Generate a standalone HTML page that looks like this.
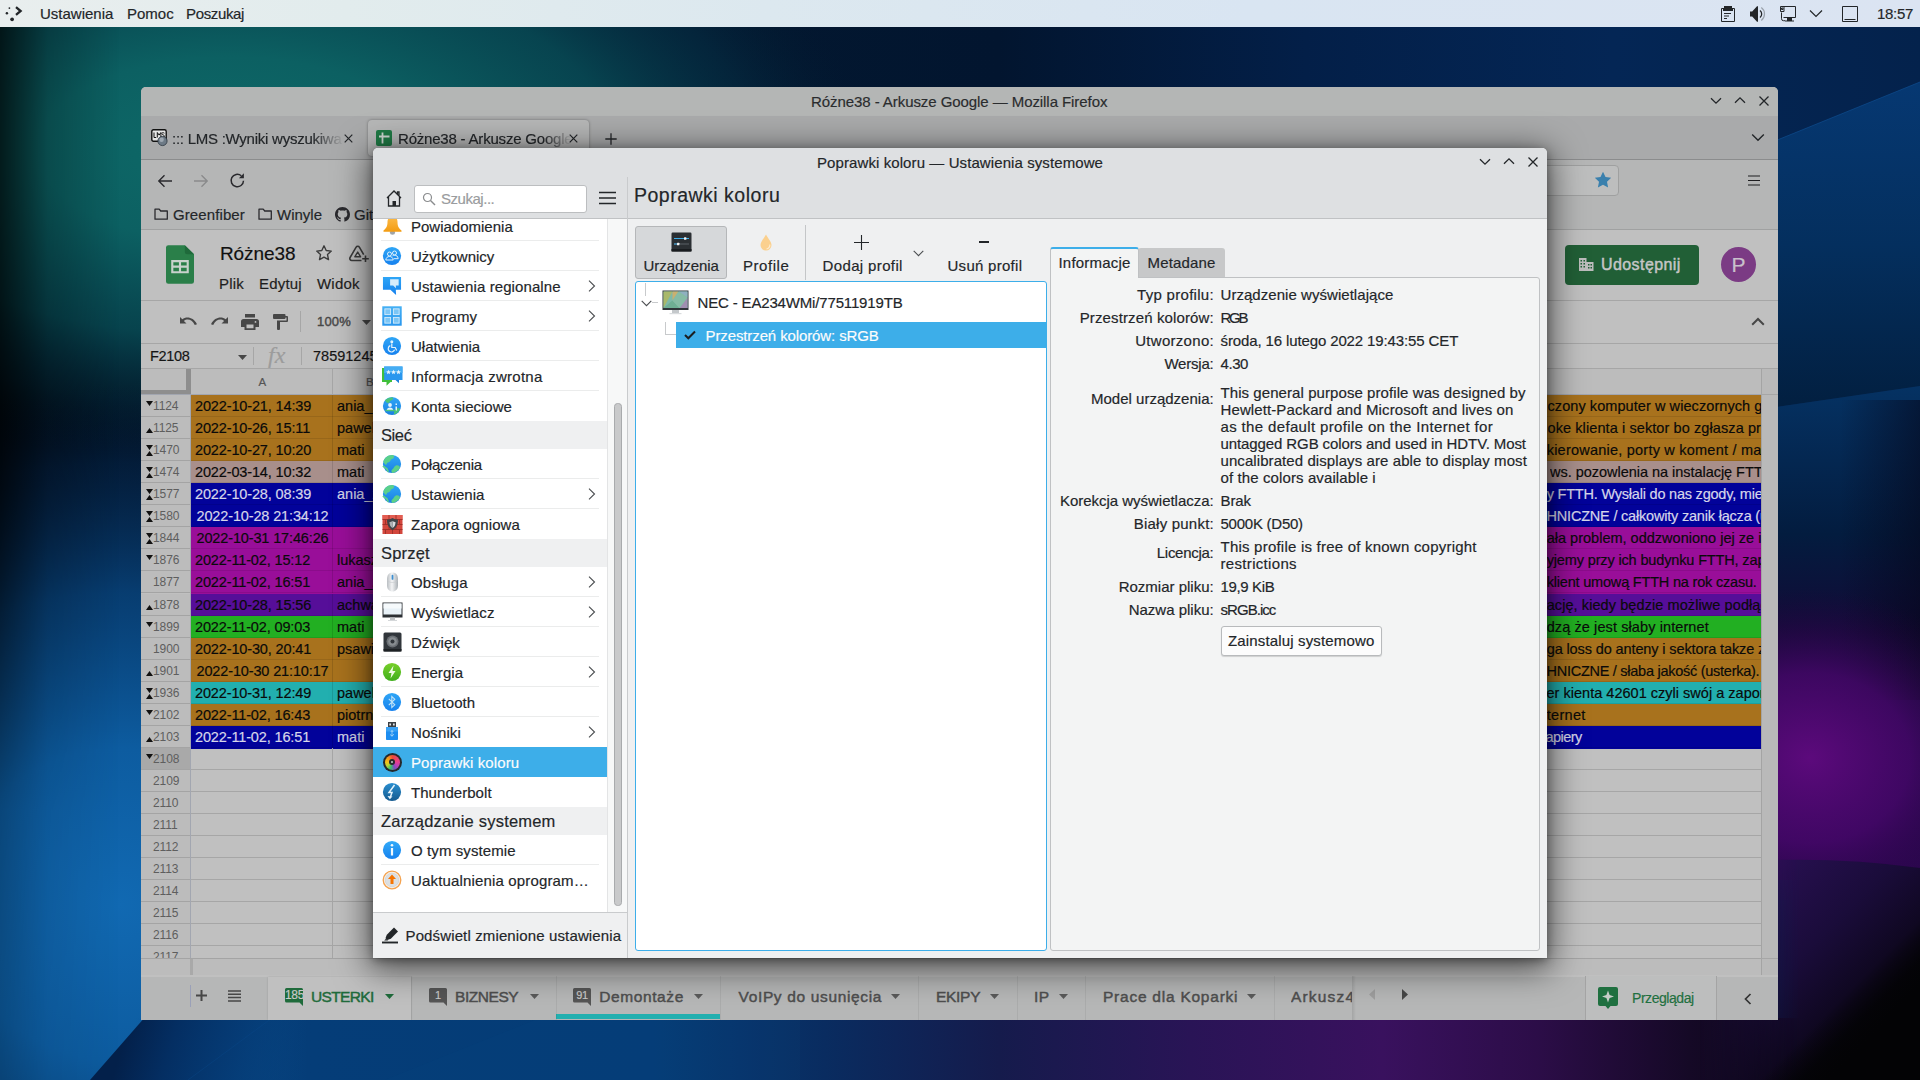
<!DOCTYPE html>
<html lang="pl"><head><meta charset="utf-8"><title>Poprawki koloru</title>
<style>
*{box-sizing:border-box;margin:0;padding:0}
html,body{width:1920px;height:1080px;overflow:hidden;background:#04101f}
body{font-family:"Liberation Sans",sans-serif;font-size:15px;color:#232629;position:relative}
.a{position:absolute}
svg{display:block;overflow:visible}
span,div{white-space:nowrap}
#wall{position:absolute;left:0;top:0;width:1920px;height:1080px}
</style></head>
<body>
<svg id="wall" width="1920" height="1080" viewBox="0 0 1920 1080">
<defs>
<linearGradient id="wbase" x1="0" y1="0" x2="1" y2="0">
<stop offset="0" stop-color="#020d16"/><stop offset=".36" stop-color="#031830"/><stop offset=".52" stop-color="#02152f"/><stop offset=".68" stop-color="#031f48"/><stop offset=".84" stop-color="#042655"/><stop offset="1" stop-color="#04224c"/>
</linearGradient>
<radialGradient id="wteal" cx="0" cy="0" r="1" gradientUnits="userSpaceOnUse" gradientTransform="translate(230 150) scale(640 310)">
<stop offset="0" stop-color="#0e6a68"/><stop offset=".3" stop-color="#0c6062"/><stop offset=".6" stop-color="#084c56" stop-opacity=".85"/><stop offset=".82" stop-color="#053448" stop-opacity=".45"/><stop offset="1" stop-color="#031c30" stop-opacity="0"/>
</radialGradient>
<radialGradient id="wblue" cx="0" cy="0" r="1" gradientUnits="userSpaceOnUse" gradientTransform="translate(120 905) scale(560 520)">
<stop offset="0" stop-color="#1169b2"/><stop offset=".3" stop-color="#0d5ca0"/><stop offset=".6" stop-color="#08427a" stop-opacity=".9"/><stop offset=".85" stop-color="#052a58" stop-opacity=".5"/><stop offset="1" stop-color="#031c40" stop-opacity="0"/>
</radialGradient>
<linearGradient id="wleft" x1="0" y1="0" x2="1" y2="0">
<stop offset="0" stop-color="#000" stop-opacity=".7"/><stop offset=".4" stop-color="#000" stop-opacity=".22"/><stop offset="1" stop-color="#000" stop-opacity="0"/>
</linearGradient>
<linearGradient id="wleftv" x1="0" y1="0" x2="0" y2="1">
<stop offset="0" stop-color="#fff"/><stop offset=".45" stop-color="#fff"/><stop offset=".75" stop-color="#fff" stop-opacity=".35"/><stop offset="1" stop-color="#fff" stop-opacity=".25"/>
</linearGradient>
<mask id="mleft"><rect width="120" height="1080" fill="url(#wleftv)"/></mask>
<linearGradient id="wbot" x1="0" y1="0" x2="1" y2="0">
<stop offset="0" stop-color="#0a569a" stop-opacity="0"/><stop offset=".07" stop-color="#064a8a" stop-opacity="0"/><stop offset=".16" stop-color="#053d78"/><stop offset=".34" stop-color="#053c76"/><stop offset=".43" stop-color="#092c60"/><stop offset=".52" stop-color="#151b4c"/><stop offset=".62" stop-color="#291456"/><stop offset=".72" stop-color="#39115e"/><stop offset=".8" stop-color="#2c0d48"/><stop offset=".88" stop-color="#150926"/><stop offset=".94" stop-color="#0a0614"/><stop offset="1" stop-color="#020204"/>
</linearGradient>
<linearGradient id="wr1" x1="0" y1="0" x2="0" y2="1">
<stop offset="0" stop-color="#063872"/><stop offset=".5" stop-color="#042f5e"/><stop offset="1" stop-color="#021f40"/>
</linearGradient>
<linearGradient id="wr2" x1="0" y1="0" x2="0" y2="1">
<stop offset="0" stop-color="#053263"/><stop offset=".3" stop-color="#031c3f"/><stop offset=".5" stop-color="#120a36"/><stop offset="1" stop-color="#2c0650"/>
</linearGradient>
<radialGradient id="wpur" cx="0" cy="0" r="1" gradientUnits="userSpaceOnUse" gradientTransform="translate(1810 758) scale(200 170)">
<stop offset="0" stop-color="#5c0a7c"/><stop offset=".5" stop-color="#46076a" stop-opacity=".8"/><stop offset="1" stop-color="#20063c" stop-opacity="0"/>
</radialGradient>
<linearGradient id="wr3" x1="0" y1="0" x2="1" y2="1">
<stop offset="0" stop-color="#311260"/><stop offset=".45" stop-color="#1a0c3a"/><stop offset=".8" stop-color="#06040c"/><stop offset="1" stop-color="#020203"/>
</linearGradient>
<linearGradient id="wbl" gradientUnits="userSpaceOnUse" x1="122" y1="1046" x2="300" y2="1100"><stop offset="0" stop-color="#03204a"/><stop offset=".25" stop-color="#042e62"/><stop offset=".6" stop-color="#053a74" stop-opacity=".9"/><stop offset="1" stop-color="#053d78" stop-opacity="0"/></linearGradient>
<linearGradient id="wr3m" gradientUnits="userSpaceOnUse" x1="1700" y1="0" x2="1800" y2="0"><stop offset="0" stop-color="#fff" stop-opacity="0"/><stop offset="1" stop-color="#fff"/></linearGradient><mask id="mr3"><rect x="1600" y="800" width="320" height="280" fill="url(#wr3m)"/></mask>
<linearGradient id="wbk" gradientUnits="userSpaceOnUse" x1="1858" y1="982" x2="1892" y2="1016"><stop offset="0" stop-color="#030305" stop-opacity="0"/><stop offset=".6" stop-color="#030305" stop-opacity=".85"/><stop offset="1" stop-color="#030305"/></linearGradient>
<linearGradient id="wrd" x1="0" y1="0" x2="1" y2="0"><stop offset="0" stop-color="#050518" stop-opacity="0"/><stop offset="1" stop-color="#050518" stop-opacity=".55"/></linearGradient>
</defs>
<rect width="1920" height="1080" fill="url(#wbase)"/>
<rect width="1920" height="1080" fill="url(#wteal)"/>
<rect width="1920" height="1080" fill="url(#wblue)"/>
<rect x="0" y="0" width="120" height="1080" fill="url(#wleft)" mask="url(#mleft)"/>
<rect x="0" y="1018" width="1920" height="62" fill="url(#wbot)"/>
<polygon points="146,1016 90,1080 460,1080 460,1016" fill="url(#wbl)"/>
<path d="M272,1018 L188,1080" stroke="#0a4a8c" stroke-width="1" opacity=".35"/>
<polygon points="540,1018 385,1080 800,1080 800,1018" fill="#0a4a8a" opacity=".10"/>
<polygon points="1770,143 1920,82 1920,386 1770,408" fill="url(#wr1)"/><path d="M1770,143 L1920,82" stroke="#0e4c8e" stroke-width="1" opacity=".7"/>
<polygon points="1770,408 1920,386 1920,880 1770,880" fill="url(#wr2)"/><rect x="1840" y="400" width="80" height="300" fill="url(#wrd)"/>
<rect x="1600" y="560" width="320" height="340" fill="url(#wpur)"/>
<path d="M1700,860 L1770,860 Q1850,858 1920,868 L1920,1080 L1700,1080 Z" fill="url(#wr3)" mask="url(#mr3)"/>
<polygon points="1920,900 1740,1080 1920,1080" fill="url(#wbk)"/>
</svg>
<style>
#panel{position:absolute;left:0;top:0;width:1920px;height:27px;background:linear-gradient(90deg,#e9eeee 0%,#e2eced 18%,#dce8ef 40%,#d9e5f2 65%,#dbe4f2 100%);color:#232629}
#panel .t{position:absolute;top:4px;font-size:15px;line-height:19px;-webkit-text-stroke:.18px currentColor}
#panel svg{position:absolute}
</style>
<div id="panel">
<svg style="left:4px;top:5px" width="20" height="18" viewBox="0 0 20 18"><g fill="#232629"><circle cx="5.4" cy="3.1" r="0.9"/><circle cx="2.9" cy="8.3" r="1.25"/><circle cx="8.1" cy="14.3" r="1.85"/></g><path d="M12 2.2 L16.6 6 L12 9.8" fill="none" stroke="#232629" stroke-width="2.3"/></svg>
<span class="t" style="left:40px">Ustawienia</span>
<span class="t" style="left:127px">Pomoc</span>
<span class="t" style="left:186px;letter-spacing:-.35px">Poszukaj</span>
<!-- clipboard -->
<svg style="left:1720px;top:5px" width="16" height="18" viewBox="0 0 16 18"><g fill="none" stroke="#232629" stroke-width="1"><path d="M1.5 3.5h13v13h-13z"/><path d="M4 8.5h7M4 11h5M4 13.5h3"/></g><path d="M4 1h8v2h1v3H3V3h1z" fill="#232629"/></svg>
<!-- volume -->
<svg style="left:1749px;top:5px" width="18" height="18" viewBox="0 0 18 18"><path d="M1 6.5h2.2L8 1.2h1v15.6H8L3.2 11.5H1z" fill="#232629"/><path d="M11 5.5a4.5 4.5 0 0 1 0 7" fill="none" stroke="#232629" stroke-width="1.3"/><path d="M12.3 2.6a8 8 0 0 1 0 12.8" fill="none" stroke="#232629" stroke-opacity=".35" stroke-width="1.2"/></svg>
<!-- network -->
<svg style="left:1779px;top:5px" width="18" height="18" viewBox="0 0 18 18"><g fill="none" stroke="#232629" stroke-width="1"><path d="M5 1.5h11.5v11H4.5"/><path d="M1.5 1.5h3.5v5h-3.5z"/><path d="M2.5 3h1.5v1.5h-1.5z"/><path d="M2.5 7.5v6.2a2 2 0 0 0 2 2h1.5"/></g><path d="M8 13h5v2.5h2v1H6v-1h2z" fill="#232629"/></svg>
<!-- chevron -->
<svg style="left:1809px;top:9px" width="14" height="9" viewBox="0 0 14 9"><path d="M1 1.5 L7 7.5 L13 1.5" fill="none" stroke="#232629" stroke-width="1.2"/></svg>
<!-- square -->
<svg style="left:1841px;top:5px" width="18" height="18" viewBox="0 0 18 18"><g fill="none" stroke="#232629" stroke-width="1"><path d="M1.5 1.5h15v15h-15z"/><path d="M3.5 14.5h11"/></g></svg>
<span class="t" style="left:1877px;letter-spacing:-.3px">18:57</span>
</div>
<style>
#ff{position:absolute;left:141px;top:87px;width:1637px;height:933px;background:#c0c0c0;border-radius:5px 5px 0 0;overflow:hidden;color:#1c1c1c;-webkit-text-stroke:.18px currentColor}
#ff .a{position:absolute}
#ff svg{position:absolute}
#ff .ln{position:absolute;background:#a6a6a6}
.ftab{font-size:15px;line-height:18px;color:#232629}
.cell{position:absolute;height:22px;font-size:14.5px;line-height:23px;overflow:hidden}
.rh{position:absolute;left:0;width:49px;height:22px;font-size:12px;line-height:23px;color:#5a5a5a;text-align:left;border-bottom:1px solid #a4a4a4;background:#bcbcbc;padding-left:12px;letter-spacing:-.1px;-webkit-text-stroke:0;color:#5e5e5e}
.stab{position:absolute;top:900px;font-size:15.5px;font-weight:400;line-height:20px;color:#4e4e4e;-webkit-text-stroke:.45px currentColor}
</style>
<div id="ff">
<div class="a" style="left:0;top:0;width:1637px;height:29px;background:#b4b6b5"></div>
<div class="a" style="left:670px;top:5px;font-size:15px;line-height:19px;color:#2a2c2e;letter-spacing:-.07px">Różne38 - Arkusze Google — Mozilla Firefox</div>
<svg style="left:1569px;top:10px" width="12" height="8" viewBox="0 0 12 8"><path d="M1 1.2 L6 6.2 L11 1.2" fill="none" stroke="#232629" stroke-width="1.3"/></svg>
<svg style="left:1593px;top:9px" width="12" height="8" viewBox="0 0 12 8"><path d="M1 6.8 L6 1.8 L11 6.8" fill="none" stroke="#232629" stroke-width="1.3"/></svg>
<svg style="left:1618px;top:9px" width="10" height="10" viewBox="0 0 10 10"><path d="M.5 .5 L9.5 9.5 M9.5 .5 L.5 9.5" fill="none" stroke="#232629" stroke-width="1.3"/></svg>
<div class="a" style="left:0;top:29px;width:1637px;height:44px;background:#a9aaab;border-bottom:1px solid #8b8c8d"></div>
<svg style="left:10px;top:42px" width="17" height="18" viewBox="0 0 17 18"><rect x=".8" y=".8" width="14.4" height="11.4" rx="1.6" fill="#e8e8e8" stroke="#111" stroke-width="1.4"/><path d="M3 3.5v5h2.2M6.3 8.5v-5l1.8 2.6 1.8-2.6v5M13.4 4.2c-1.8-1.2-3-.2-2.4.9.6 1 2.6.8 2.4 2.3-.2 1.200-2 1.200-2.800.4" fill="none" stroke="#111" stroke-width="1"/><circle cx="11.500" cy="12" r="4.600" fill="#6d7a86"/><circle cx="10.600" cy="10.800" r="2.200" fill="#aab4bd" opacity=".8"/><circle cx="11.500" cy="12" r="4.600" fill="none" stroke="#2c3640" stroke-width=".8"/></svg>
<div class="a ftab" style="left:31px;top:43px;width:170px;overflow:hidden;letter-spacing:-.25px;-webkit-mask-image:linear-gradient(90deg,#000 140px,transparent 172px)">::: LMS :Wyniki wyszukiwania</div>
<svg style="left:203px;top:47px" width="9" height="9" viewBox="0 0 9 9"><path d="M.7 .7 L8.300 8.300 M8.300 .7 L.7 8.300" fill="none" stroke="#232629" stroke-width="1.2"/></svg>
<div class="a" style="left:227px;top:33px;width:221px;height:36px;background:#b6b7b7;border-radius:4px;box-shadow:0 0 3px rgba(0,0,0,.35)"></div>
<svg style="left:235px;top:43px" width="16" height="16" viewBox="0 0 16 16"><rect width="16" height="16" rx="2" fill="#1f7a45"/><path d="M6.5 2.500v11M3 6.500h10.500" stroke="#cfd8d2" stroke-width="1.8" fill="none"/></svg>
<div class="a ftab" style="left:257px;top:43px;width:172px;overflow:hidden;letter-spacing:-.2px;-webkit-mask-image:linear-gradient(90deg,#000 145px,transparent 174px)">Różne38 - Arkusze Google</div>
<svg style="left:428px;top:47px" width="9" height="9" viewBox="0 0 9 9"><path d="M.7 .7 L8.300 8.300 M8.300 .7 L.7 8.300" fill="none" stroke="#232629" stroke-width="1.2"/></svg>
<svg style="left:464px;top:46px" width="12" height="12" viewBox="0 0 12 12"><path d="M6 .3v11.400M.3 6h11.400" fill="none" stroke="#232629" stroke-width="1.3"/></svg>
<svg style="left:1610px;top:46px" width="14" height="9" viewBox="0 0 14 9"><path d="M1.200 1.500 L7 7.300 L12.800 1.500" fill="none" stroke="#232629" stroke-width="1.400"/></svg>
<div class="a" style="left:0;top:73px;width:1637px;height:70px;background:#b5b6b6;border-bottom:1px solid #a0a1a1"></div>
<svg style="left:16px;top:86px" width="16" height="16" viewBox="0 0 16 16"><path d="M15 8H1.800M7.500 2.300 L1.800 8 L7.500 13.700" fill="none" stroke="#2a2a2e" stroke-width="1.400"/></svg>
<svg style="left:52px;top:86px" width="16" height="16" viewBox="0 0 16 16"><path d="M1 8h13.200M8.500 2.300 L14.200 8 L8.500 13.700" fill="none" stroke="#8a8b8c" stroke-width="1.400"/></svg>
<svg style="left:88px;top:85px" width="17" height="17" viewBox="0 0 17 17"><path d="M14.500 8.700a6.200 6.200 0 1 1-2.200-4.900" fill="none" stroke="#2a2a2e" stroke-width="1.500"/><path d="M14.900 1.200v5h-5z" fill="#2a2a2e"/></svg>
<div class="a" style="left:559px;top:77.5px;width:918.5px;height:31px;background:#bdbebe;border:1px solid #9fa0a0;border-radius:4px"></div>
<svg style="left:1453px;top:84px" width="18" height="18" viewBox="0 0 18 18"><path d="M9 .800l2.500 5.300 5.700.700-4.200 4 1.100 5.700L9 13.700l-5.100 2.800L5 10.800.800 6.800l5.700-.700z" fill="#3a80ad"/></svg>
<svg style="left:1607px;top:87.5px" width="12" height="11" viewBox="0 0 12 11"><path d="M0 1h12M0 5.500h12M0 10h12" stroke="#1e1e20" stroke-width="1.200" fill="none"/></svg>
<svg style="left:13px;top:120px" width="15" height="14" viewBox="0 0 15 14"><path d="M1 2.200h4.200l1.500 1.800h6.600v8.200H1z" fill="none" stroke="#2a2a2e" stroke-width="1.300" stroke-linejoin="round"/></svg>
<div class="a ftab" style="left:32px;top:119px;letter-spacing:.1px">Greenfiber</div>
<svg style="left:117px;top:120px" width="15" height="14" viewBox="0 0 15 14"><path d="M1 2.200h4.200l1.500 1.800h6.600v8.200H1z" fill="none" stroke="#2a2a2e" stroke-width="1.300" stroke-linejoin="round"/></svg>
<div class="a ftab" style="left:136px;top:119px">Winyle</div>
<svg style="left:194px;top:120px" width="15" height="15" viewBox="0 0 16 16"><path fill="#2a2a2e" d="M8 0C3.580 0 0 3.580 0 8c0 3.540 2.290 6.530 5.470 7.590.4.070.550-.170.550-.380 0-.190-.010-.820-.010-1.490-2.010.370-2.530-.490-2.690-.940-.090-.230-.480-.940-.820-1.130-.280-.150-.680-.520-.010-.530.630-.010 1.080.580 1.230.820.720 1.210 1.870.870 2.330.660.070-.520.280-.870.510-1.070-1.780-.2-3.640-.890-3.640-3.950 0-.870.310-1.590.820-2.150-.080-.2-.360-1.020.080-2.120 0 0 .670-.210 2.200.820.640-.180 1.320-.270 2-.270.680 0 1.360.090 2 .270 1.530-1.040 2.200-.820 2.200-.820.440 1.100.160 1.920.080 2.120.510.560.820 1.270.820 2.150 0 3.070-1.870 3.750-3.650 3.950.290.250.540.730.540 1.480 0 1.070-.010 1.930-.010 2.200 0 .210.150.460.550.380A8.013 8.013 0 0016 8c0-4.420-3.580-8-8-8z"/></svg>
<div class="a ftab" style="left:213px;top:119px">GitHub</div>
<svg style="left:25px;top:158px" width="28" height="39" viewBox="0 0 29 40"><path d="M2.500 0h17l9.500 9.500V37.500a2.500 2.500 0 0 1-2.500 2.500h-24A2.500 2.500 0 0 1 0 37.500v-35A2.500 2.500 0 0 1 2.500 0z" fill="#2a7f49"/><path d="M19.500 0l9.500 9.500h-7a2.500 2.500 0 0 1-2.500-2.500z" fill="#1f6a3b"/><path d="M6.500 16.500h16v11.500h-16zM6.500 22.200h16M14.500 16.500v11.500" fill="none" stroke="#c8d2cc" stroke-width="2.200"/></svg>
<div class="a" style="left:79px;top:155px;font-size:19px;line-height:24px;color:#111;letter-spacing:-.1px">Różne38</div>
<svg style="left:174px;top:157px" width="18" height="18" viewBox="0 0 18 18"><path d="M9 1.800l2.200 4.700 5.100.600-3.800 3.500 1 5L9 13.100l-4.500 2.500 1-5-3.800-3.500 5.100-.600z" fill="none" stroke="#3c3c3c" stroke-width="1.400" stroke-linejoin="round"/></svg>
<svg style="left:207px;top:158px" width="22" height="17" viewBox="0 0 22 17"><path d="M13.500 15.500H3.800a2 2 0 0 1-1.700-3L8 2.300a2 2 0 0 1 3.500 0l4.200 7.300" fill="none" stroke="#3c3c3c" stroke-width="1.600" stroke-linejoin="round"/><path d="M6.800 11.800l2.900-4.800 2.900 4.800z" fill="none" stroke="#3c3c3c" stroke-width="1.400" stroke-linejoin="round"/><path d="M17.500 10.500v6.500M14.200 13.800h6.600" stroke="#3c3c3c" stroke-width="1.600"/></svg>
<div class="a" style="left:78px;top:187px;font-size:15px;line-height:19px;color:#1e1e1e;letter-spacing:.2px">Plik</div>
<div class="a" style="left:118px;top:187px;font-size:15px;line-height:19px;color:#1e1e1e;letter-spacing:.2px">Edytuj</div>
<div class="a" style="left:176px;top:187px;font-size:15px;line-height:19px;color:#1e1e1e;letter-spacing:.2px">Widok</div>
<div class="a" style="left:1424px;top:158px;width:134px;height:40px;background:#215f36;border-radius:4px"></div>
<svg style="left:1438px;top:171px" width="15" height="13" viewBox="0 0 15 13"><path d="M0 0h7.500v4h7V13H0z" fill="#bdbdbd"/><path d="M1.500 2h1.500v1.500H1.500zM4.500 2H6v1.500H4.500zM1.500 5h1.500v1.500H1.500zM4.500 5H6v1.500H4.500zM1.500 8h1.500v1.500H1.500zM4.500 8H6v1.500H4.500zM9 6h1.500v1.500H9zM11.500 6H13v1.500h-1.500zM9 9h1.500v1.500H9zM11.500 9H13v1.500h-1.500z" fill="#215f36"/></svg>
<div class="a" style="left:1460px;top:168px;font-size:16px;line-height:20px;color:#c6c6c6;-webkit-text-stroke:.45px #c6c6c6;letter-spacing:.42px">Udostępnij</div>
<div class="a" style="left:1580px;top:160px;width:35px;height:35px;border-radius:50%;background:#7b3b84;color:#c9c1cb;font-size:21px;line-height:35px;text-align:center">P</div>
<div class="ln" style="left:0;top:213px;width:1637px;height:1px"></div>
<div class="ln" style="left:0;top:256px;width:1637px;height:1px"></div>
<svg style="left:39px;top:230px" width="18" height="10" viewBox="0 0 18 10"><path d="M0 0v6.500h6.500L3.900 3.900C7 1.300 12 2 14.800 8l2.200-.8C13.500.200 6.500-1 2.300 2.300z" fill="#474747"/></svg>
<svg style="left:69px;top:230px" width="18" height="10" viewBox="0 0 18 10"><path d="M18 0v6.500h-6.500l2.600-2.600C11 1.300 6 2 3.200 8L1 7.200C4.500.200 11.500-1 15.700 2.300z" fill="#474747"/></svg>
<svg style="left:100px;top:227px" width="18" height="16" viewBox="0 0 18 16"><path d="M4 0h10v3.500H4zM2.500 5h13A2.500 2.500 0 0 1 18 7.500V13h-3.500v3H3.500v-3H0V7.500A2.500 2.500 0 0 1 2.500 5zM5.500 10.500v3.800h7v-3.800zM14.500 7a.9.9 0 1 0 0 1.800.9.9 0 0 0 0-1.800z" fill="#474747" fill-rule="evenodd"/></svg>
<svg style="left:132px;top:227px" width="15" height="16" viewBox="0 0 15 16"><path d="M1 0h10.500a1 1 0 0 1 1 1v1h1.500a1 1 0 0 1 1 1v4a1 1 0 0 1-1 1H7v7a1 1 0 0 1-1 1H5a1 1 0 0 1-1-1V6.500h9.500v-3h-1V4a1 1 0 0 1-1 1H1a1 1 0 0 1-1-1V1a1 1 0 0 1 1-1z" fill="#474747"/></svg>
<div class="ln" style="left:159px;top:224px;width:1px;height:21px"></div>
<div class="a" style="left:176px;top:226px;font-size:13px;font-weight:400;line-height:18px;color:#474747;-webkit-text-stroke:.4px #474747;letter-spacing:.2px">100%</div>
<svg style="left:221px;top:233px" width="9" height="5" viewBox="0 0 9 5"><path d="M0 0h9L4.500 5z" fill="#474747"/></svg>
<svg style="left:1610px;top:230px" width="14" height="9" viewBox="0 0 14 9"><path d="M1.200 7.800 L7 2 L12.800 7.800" fill="none" stroke="#474747" stroke-width="2"/></svg>
<div class="ln" style="left:0;top:281px;width:1637px;height:1px"></div>
<div class="a" style="left:9px;top:259px;font-size:14.500px;line-height:20px;color:#151515;letter-spacing:-.35px">F2108</div>
<svg style="left:97px;top:268px" width="9" height="5" viewBox="0 0 9 5"><path d="M0 0h9L4.500 5z" fill="#474747"/></svg>
<div class="ln" style="left:112px;top:260px;width:1px;height:18px"></div>
<div class="a" style="left:127px;top:256px;font-family:'Liberation Serif',serif;font-style:italic;font-size:24px;line-height:24px;color:#9c9c9c">fx</div>
<div class="ln" style="left:160px;top:260px;width:1px;height:18px"></div>
<div class="a" style="left:172px;top:259px;font-size:14.500px;line-height:20px;color:#151515">78591245</div>
<div class="a" style="left:0;top:282px;width:1637px;height:26px;background:#bcbcbc;border-bottom:1px solid #a2a6b0"></div>
<div class="a" style="left:45px;top:282px;width:5px;height:25px;background:#8e8e8e"></div>
<div class="a" style="left:0;top:303px;width:50px;height:4px;background:#8e8e8e"></div>
<div class="ln" style="left:191px;top:282px;width:1px;height:25px"></div>
<div class="a" style="left:117.5px;top:287px;font-size:11.500px;line-height:16px;color:#555">A</div>
<div class="a" style="left:225px;top:287px;font-size:11.500px;line-height:16px;color:#555">B</div>
<div class="rh" style="top:308px;background:#bcbcbc">1124</div>
<svg style="left:5px;top:314px" width="7" height="5" viewBox="0 0 7 5"><path d="M0 0h7L3.500 5z" fill="#111"/></svg>
<div class="a" style="left:50px;top:308px;width:1570px;height:23px;background:#a8721d"></div>
<div class="cell" style="left:50px;top:308px;width:141px;padding-left:4px;color:#0a0a0a;letter-spacing:-.14px">2022-10-21, 14:39</div>
<div class="ln" style="left:191px;top:308px;width:1px;height:22px;background:rgba(0,0,0,.12)"></div>
<div class="ln" style="left:50px;top:329px;width:1570px;height:1px;background:rgba(0,0,0,.09)"></div>
<div class="cell" style="left:192px;top:308px;width:60px;padding-left:4px;color:#0a0a0a">ania_z</div>
<div class="cell" style="left:1406.5px;top:308px;width:213.5px;color:#0a0a0a;letter-spacing:0.073px">czony komputer w wieczornych godz</div>
<div class="rh" style="top:330px;background:#bcbcbc">1125</div>
<svg style="left:5px;top:341px" width="7" height="5" viewBox="0 0 7 5"><path d="M0 5h7L3.500 0z" fill="#111"/></svg>
<div class="a" style="left:50px;top:330px;width:1570px;height:23px;background:#a8721d"></div>
<div class="cell" style="left:50px;top:330px;width:141px;padding-left:4px;color:#0a0a0a;letter-spacing:-.14px">2022-10-26, 15:11</div>
<div class="ln" style="left:191px;top:330px;width:1px;height:22px;background:rgba(0,0,0,.12)"></div>
<div class="ln" style="left:50px;top:351px;width:1570px;height:1px;background:rgba(0,0,0,.09)"></div>
<div class="cell" style="left:192px;top:330px;width:60px;padding-left:4px;color:#0a0a0a">pawel</div>
<div class="cell" style="left:1406.5px;top:330px;width:213.5px;color:#0a0a0a;letter-spacing:0.092px">oke klienta i sektor bo zgłasza prob</div>
<div class="rh" style="top:352px;background:#bcbcbc">1470</div>
<svg style="left:5px;top:358px" width="7" height="11" viewBox="0 0 7 11"><path d="M0 0h7L3.500 5z M0 11h7L3.500 6z" fill="#111"/></svg>
<div class="a" style="left:50px;top:352px;width:1570px;height:23px;background:#a8721d"></div>
<div class="cell" style="left:50px;top:352px;width:141px;padding-left:4px;color:#0a0a0a;letter-spacing:-.14px">2022-10-27, 10:20</div>
<div class="ln" style="left:191px;top:352px;width:1px;height:22px;background:rgba(0,0,0,.12)"></div>
<div class="ln" style="left:50px;top:373px;width:1570px;height:1px;background:rgba(0,0,0,.09)"></div>
<div class="cell" style="left:192px;top:352px;width:60px;padding-left:4px;color:#0a0a0a">mati</div>
<div class="cell" style="left:1405.7px;top:352px;width:214.29999999999995px;color:#0a0a0a;letter-spacing:0.224px">kierowanie, porty w koment / mail</div>
<div class="rh" style="top:374px;background:#bcbcbc">1474</div>
<svg style="left:5px;top:380px" width="7" height="11" viewBox="0 0 7 11"><path d="M0 0h7L3.500 5z M0 11h7L3.500 6z" fill="#111"/></svg>
<div class="a" style="left:50px;top:374px;width:1570px;height:23px;background:#a88f8b"></div>
<div class="cell" style="left:50px;top:374px;width:141px;padding-left:4px;color:#0a0a0a;letter-spacing:-.14px">2022-03-14, 10:32</div>
<div class="ln" style="left:191px;top:374px;width:1px;height:22px;background:rgba(0,0,0,.12)"></div>
<div class="ln" style="left:50px;top:395px;width:1570px;height:1px;background:rgba(0,0,0,.09)"></div>
<div class="cell" style="left:192px;top:374px;width:60px;padding-left:4px;color:#0a0a0a">mati</div>
<div class="cell" style="left:1409.1px;top:374px;width:210.9000000000001px;color:#0a0a0a;letter-spacing:-0.034px">ws. pozowlenia na instalację FTTH</div>
<div class="rh" style="top:396px;background:#bcbcbc">1577</div>
<svg style="left:5px;top:402px" width="7" height="11" viewBox="0 0 7 11"><path d="M0 0h7L3.500 5z M0 11h7L3.500 6z" fill="#111"/></svg>
<div class="a" style="left:50px;top:396px;width:1570px;height:23px;background:#02029a"></div>
<div class="cell" style="left:50px;top:396px;width:141px;padding-left:4px;color:#d6d6ea;letter-spacing:-.14px">2022-10-28, 08:39</div>
<div class="ln" style="left:191px;top:396px;width:1px;height:22px;background:rgba(0,0,0,.12)"></div>
<div class="ln" style="left:50px;top:417px;width:1570px;height:1px;background:rgba(0,0,0,.09)"></div>
<div class="cell" style="left:192px;top:396px;width:60px;padding-left:4px;color:#d6d6ea">ania_z</div>
<div class="cell" style="left:1405.7px;top:396px;width:214.29999999999995px;color:#d6d6ea;letter-spacing:-0.21px">y FTTH. Wysłali do nas zgody, miesz</div>
<div class="rh" style="top:418px;background:#bcbcbc">1580</div>
<svg style="left:5px;top:424px" width="7" height="11" viewBox="0 0 7 11"><path d="M0 0h7L3.500 5z M0 11h7L3.500 6z" fill="#111"/></svg>
<div class="a" style="left:50px;top:418px;width:1570px;height:23px;background:#02029a"></div>
<div class="cell" style="left:50px;top:418px;width:141px;padding-left:5.5px;color:#d6d6ea;letter-spacing:-.14px">2022-10-28 21:34:12</div>
<div class="ln" style="left:191px;top:418px;width:1px;height:22px;background:rgba(0,0,0,.12)"></div>
<div class="ln" style="left:50px;top:439px;width:1570px;height:1px;background:rgba(0,0,0,.09)"></div>
<div class="cell" style="left:1405.5px;top:418px;width:214.5px;color:#d6d6ea;letter-spacing:-0.197px">HNICZNE / całkowity zanik łącza (u</div>
<div class="rh" style="top:440px;background:#bcbcbc">1844</div>
<svg style="left:5px;top:446px" width="7" height="11" viewBox="0 0 7 11"><path d="M0 0h7L3.500 5z M0 11h7L3.500 6z" fill="#111"/></svg>
<div class="a" style="left:50px;top:440px;width:1570px;height:23px;background:#990e99"></div>
<div class="cell" style="left:50px;top:440px;width:141px;padding-left:5.5px;color:#0a0a0a;letter-spacing:-.14px">2022-10-31 17:46:26</div>
<div class="ln" style="left:191px;top:440px;width:1px;height:22px;background:rgba(0,0,0,.12)"></div>
<div class="ln" style="left:50px;top:461px;width:1570px;height:1px;background:rgba(0,0,0,.09)"></div>
<div class="cell" style="left:1405.7px;top:440px;width:214.29999999999995px;color:#0a0a0a;letter-spacing:0.008px">ała problem, oddzwoniono jej ze inf</div>
<div class="rh" style="top:462px;background:#bcbcbc">1876</div>
<svg style="left:5px;top:468px" width="7" height="5" viewBox="0 0 7 5"><path d="M0 0h7L3.500 5z" fill="#111"/></svg>
<div class="a" style="left:50px;top:462px;width:1570px;height:23px;background:#990e99"></div>
<div class="cell" style="left:50px;top:462px;width:141px;padding-left:4px;color:#0a0a0a;letter-spacing:-.14px">2022-11-02, 15:12</div>
<div class="ln" style="left:191px;top:462px;width:1px;height:22px;background:rgba(0,0,0,.12)"></div>
<div class="ln" style="left:50px;top:483px;width:1570px;height:1px;background:rgba(0,0,0,.09)"></div>
<div class="cell" style="left:192px;top:462px;width:60px;padding-left:4px;color:#0a0a0a">lukasz</div>
<div class="cell" style="left:1405.7px;top:462px;width:214.29999999999995px;color:#0a0a0a;letter-spacing:-0.143px">yjemy przy ich budynku FTTH, zapyt</div>
<div class="rh" style="top:484px;background:#bcbcbc">1877</div>
<div class="a" style="left:50px;top:484px;width:1570px;height:23px;background:#990e99"></div>
<div class="cell" style="left:50px;top:484px;width:141px;padding-left:4px;color:#0a0a0a;letter-spacing:-.14px">2022-11-02, 16:51</div>
<div class="ln" style="left:191px;top:484px;width:1px;height:22px;background:rgba(0,0,0,.12)"></div>
<div class="ln" style="left:50px;top:505px;width:1570px;height:1px;background:rgba(0,0,0,.09)"></div>
<div class="cell" style="left:192px;top:484px;width:60px;padding-left:4px;color:#0a0a0a">ania_z</div>
<div class="cell" style="left:1405.7px;top:484px;width:214.29999999999995px;color:#0a0a0a;letter-spacing:-0.192px">klient umową FTTH na rok czasu.</div>
<div class="rh" style="top:507px;background:#bcbcbc">1878</div>
<svg style="left:5px;top:518px" width="7" height="5" viewBox="0 0 7 5"><path d="M0 5h7L3.500 0z" fill="#111"/></svg>
<div class="a" style="left:50px;top:507px;width:1570px;height:23px;background:#560e99"></div>
<div class="cell" style="left:50px;top:507px;width:141px;padding-left:4px;color:#0a0a0a;letter-spacing:-.14px">2022-10-28, 15:56</div>
<div class="ln" style="left:191px;top:507px;width:1px;height:22px;background:rgba(0,0,0,.12)"></div>
<div class="ln" style="left:50px;top:528px;width:1570px;height:1px;background:rgba(0,0,0,.09)"></div>
<div class="cell" style="left:192px;top:507px;width:60px;padding-left:4px;color:#0a0a0a">achwa</div>
<div class="cell" style="left:1405.7px;top:507px;width:214.29999999999995px;color:#0a0a0a;letter-spacing:0.082px">ację, kiedy będzie możliwe podłącz</div>
<div class="rh" style="top:529px;background:#bcbcbc">1899</div>
<svg style="left:5px;top:535px" width="7" height="5" viewBox="0 0 7 5"><path d="M0 0h7L3.500 5z" fill="#111"/></svg>
<div class="a" style="left:50px;top:529px;width:1570px;height:23px;background:#22af22"></div>
<div class="cell" style="left:50px;top:529px;width:141px;padding-left:4px;color:#0a0a0a;letter-spacing:-.14px">2022-11-02, 09:03</div>
<div class="ln" style="left:191px;top:529px;width:1px;height:22px;background:rgba(0,0,0,.12)"></div>
<div class="ln" style="left:50px;top:550px;width:1570px;height:1px;background:rgba(0,0,0,.09)"></div>
<div class="cell" style="left:192px;top:529px;width:60px;padding-left:4px;color:#0a0a0a">mati</div>
<div class="cell" style="left:1405.7px;top:529px;width:214.29999999999995px;color:#0a0a0a;letter-spacing:0.097px">dzą że jest słaby internet</div>
<div class="rh" style="top:551px;background:#bcbcbc">1900</div>
<div class="a" style="left:50px;top:551px;width:1570px;height:23px;background:#a8721d"></div>
<div class="cell" style="left:50px;top:551px;width:141px;padding-left:4px;color:#0a0a0a;letter-spacing:-.14px">2022-10-30, 20:41</div>
<div class="ln" style="left:191px;top:551px;width:1px;height:22px;background:rgba(0,0,0,.12)"></div>
<div class="ln" style="left:50px;top:572px;width:1570px;height:1px;background:rgba(0,0,0,.09)"></div>
<div class="cell" style="left:192px;top:551px;width:60px;padding-left:4px;color:#0a0a0a">psawi</div>
<div class="cell" style="left:1405.7px;top:551px;width:214.29999999999995px;color:#0a0a0a;letter-spacing:-0.114px">ga loss do anteny i sektora takze za</div>
<div class="rh" style="top:573px;background:#bcbcbc">1901</div>
<svg style="left:5px;top:584px" width="7" height="5" viewBox="0 0 7 5"><path d="M0 5h7L3.500 0z" fill="#111"/></svg>
<div class="a" style="left:50px;top:573px;width:1570px;height:23px;background:#a8721d"></div>
<div class="cell" style="left:50px;top:573px;width:141px;padding-left:5.5px;color:#0a0a0a;letter-spacing:-.14px">2022-10-30 21:10:17</div>
<div class="ln" style="left:191px;top:573px;width:1px;height:22px;background:rgba(0,0,0,.12)"></div>
<div class="ln" style="left:50px;top:594px;width:1570px;height:1px;background:rgba(0,0,0,.09)"></div>
<div class="cell" style="left:1405.5px;top:573px;width:214.5px;color:#0a0a0a;letter-spacing:-0.266px">HNICZNE / słaba jakość (usterka).</div>
<div class="rh" style="top:595px;background:#bcbcbc">1936</div>
<svg style="left:5px;top:601px" width="7" height="11" viewBox="0 0 7 11"><path d="M0 0h7L3.500 5z M0 11h7L3.500 6z" fill="#111"/></svg>
<div class="a" style="left:50px;top:595px;width:1570px;height:23px;background:#22afaf"></div>
<div class="cell" style="left:50px;top:595px;width:141px;padding-left:4px;color:#0a0a0a;letter-spacing:-.14px">2022-10-31, 12:49</div>
<div class="ln" style="left:191px;top:595px;width:1px;height:22px;background:rgba(0,0,0,.12)"></div>
<div class="ln" style="left:50px;top:616px;width:1570px;height:1px;background:rgba(0,0,0,.09)"></div>
<div class="cell" style="left:192px;top:595px;width:60px;padding-left:4px;color:#0a0a0a">pawel</div>
<div class="cell" style="left:1405.5px;top:595px;width:214.5px;color:#0a0a0a;letter-spacing:0.017px">er kienta 42601 czyli swój a zaporo</div>
<div class="rh" style="top:617px;background:#bcbcbc">2102</div>
<svg style="left:5px;top:623px" width="7" height="5" viewBox="0 0 7 5"><path d="M0 0h7L3.500 5z" fill="#111"/></svg>
<div class="a" style="left:50px;top:617px;width:1570px;height:23px;background:#a8721d"></div>
<div class="cell" style="left:50px;top:617px;width:141px;padding-left:4px;color:#0a0a0a;letter-spacing:-.14px">2022-11-02, 16:43</div>
<div class="ln" style="left:191px;top:617px;width:1px;height:22px;background:rgba(0,0,0,.12)"></div>
<div class="ln" style="left:50px;top:638px;width:1570px;height:1px;background:rgba(0,0,0,.09)"></div>
<div class="cell" style="left:192px;top:617px;width:60px;padding-left:4px;color:#0a0a0a">piotrn</div>
<div class="cell" style="left:1405.7px;top:617px;width:214.29999999999995px;color:#0a0a0a;letter-spacing:0.304px">ternet</div>
<div class="rh" style="top:639px;background:#bcbcbc">2103</div>
<svg style="left:5px;top:650px" width="7" height="5" viewBox="0 0 7 5"><path d="M0 5h7L3.500 0z" fill="#111"/></svg>
<div class="a" style="left:50px;top:639px;width:1570px;height:23px;background:#02029a"></div>
<div class="cell" style="left:50px;top:639px;width:141px;padding-left:4px;color:#d6d6ea;letter-spacing:-.14px">2022-11-02, 16:51</div>
<div class="ln" style="left:191px;top:639px;width:1px;height:22px;background:rgba(0,0,0,.12)"></div>
<div class="ln" style="left:50px;top:660px;width:1570px;height:1px;background:rgba(0,0,0,.09)"></div>
<div class="cell" style="left:192px;top:639px;width:60px;padding-left:4px;color:#d6d6ea">mati</div>
<div class="cell" style="left:1404.5px;top:639px;width:215.5px;color:#d6d6ea;letter-spacing:-0.549px">apiery</div>
<div class="rh" style="top:661px;background:#a9a9a9">2108</div>
<svg style="left:5px;top:667px" width="7" height="5" viewBox="0 0 7 5"><path d="M0 0h7L3.500 5z" fill="#111"/></svg>
<div class="ln" style="left:50px;top:682px;width:1570px;height:1px"></div>
<div class="ln" style="left:191px;top:661px;width:1px;height:22px"></div>
<div class="rh" style="top:683px;background:#bcbcbc">2109</div>
<div class="ln" style="left:50px;top:704px;width:1570px;height:1px"></div>
<div class="ln" style="left:191px;top:683px;width:1px;height:22px"></div>
<div class="rh" style="top:705px;background:#bcbcbc">2110</div>
<div class="ln" style="left:50px;top:726px;width:1570px;height:1px"></div>
<div class="ln" style="left:191px;top:705px;width:1px;height:22px"></div>
<div class="rh" style="top:727px;background:#bcbcbc">2111</div>
<div class="ln" style="left:50px;top:748px;width:1570px;height:1px"></div>
<div class="ln" style="left:191px;top:727px;width:1px;height:22px"></div>
<div class="rh" style="top:749px;background:#bcbcbc">2112</div>
<div class="ln" style="left:50px;top:770px;width:1570px;height:1px"></div>
<div class="ln" style="left:191px;top:749px;width:1px;height:22px"></div>
<div class="rh" style="top:771px;background:#bcbcbc">2113</div>
<div class="ln" style="left:50px;top:792px;width:1570px;height:1px"></div>
<div class="ln" style="left:191px;top:771px;width:1px;height:22px"></div>
<div class="rh" style="top:793px;background:#bcbcbc">2114</div>
<div class="ln" style="left:50px;top:814px;width:1570px;height:1px"></div>
<div class="ln" style="left:191px;top:793px;width:1px;height:22px"></div>
<div class="rh" style="top:815px;background:#bcbcbc">2115</div>
<div class="ln" style="left:50px;top:836px;width:1570px;height:1px"></div>
<div class="ln" style="left:191px;top:815px;width:1px;height:22px"></div>
<div class="rh" style="top:837px;background:#bcbcbc">2116</div>
<div class="ln" style="left:50px;top:858px;width:1570px;height:1px"></div>
<div class="ln" style="left:191px;top:837px;width:1px;height:22px"></div>
<div class="rh" style="top:859px;background:#bcbcbc">2117</div>
<div class="ln" style="left:50px;top:880px;width:1570px;height:1px"></div>
<div class="ln" style="left:191px;top:859px;width:1px;height:22px"></div>
<div class="ln" style="left:49px;top:308px;width:1px;height:563px;background:#a2a6b0"></div>
<div class="a" style="left:1620px;top:282px;width:17px;height:606px;background:#b9b9b9;border-left:1px solid #a4a4a4"></div>
<div class="ln" style="left:1620px;top:307px;width:17px;height:1px"></div>
<div class="ln" style="left:1620px;top:871px;width:17px;height:1px"></div>
<div class="a" style="left:0;top:871px;width:1620px;height:17px;background:#bcbcbc;border-top:1px solid #a4a4a4"></div>
<div class="a" style="left:49px;top:872px;width:3px;height:16px;background:#a9a9a9"></div>
<div class="a" style="left:0;top:890px;width:1637px;height:43px;background:#b6b7b7"></div>
<div class="a" style="left:127px;top:890px;width:143px;height:43px;background:#c0c0c0;box-shadow:0 0 2px rgba(0,0,0,.15)"></div>
<div class="a" style="left:49px;top:898px;width:1px;height:22px;background:#9aa0b8"></div>
<svg style="left:55px;top:903px" width="11" height="11" viewBox="0 0 11 11"><path d="M5.500 0v11M0 5.500h11" stroke="#474747" stroke-width="2" fill="none"/></svg>
<svg style="left:87px;top:903px" width="13" height="12" viewBox="0 0 13 12"><path d="M0 1h13M0 4.300h13M0 7.600h13M0 11h13" stroke="#474747" stroke-width="1.500" fill="none"/></svg>
<svg style="left:144px;top:901px" width="18" height="18" viewBox="0 0 18 18"><path d="M1.500 0h15A1.500 1.500 0 0 1 18 1.500V18l-3.500-3.500H1.500A1.500 1.500 0 0 1 0 13V1.500A1.500 1.500 0 0 1 1.500 0z" fill="#1f6b3b"/></svg>
<div class="a" style="left:144px;top:901px;width:18px;height:15px;font-size:12px;line-height:15px;text-align:center;color:#c9c9c9;overflow:hidden;letter-spacing:-.3px">185</div>
<svg style="left:288px;top:901px" width="18" height="18" viewBox="0 0 18 18"><path d="M1.500 0h15A1.500 1.500 0 0 1 18 1.500V18l-3.500-3.500H1.500A1.500 1.500 0 0 1 0 13V1.500A1.500 1.500 0 0 1 1.500 0z" fill="#555"/></svg>
<div class="a" style="left:288px;top:901px;width:18px;height:15px;font-size:11px;line-height:15px;text-align:center;color:#c9c9c9;overflow:hidden;letter-spacing:-.3px">1</div>
<svg style="left:432px;top:901px" width="18" height="18" viewBox="0 0 18 18"><path d="M1.500 0h15A1.500 1.500 0 0 1 18 1.500V18l-3.500-3.500H1.500A1.500 1.500 0 0 1 0 13V1.500A1.500 1.500 0 0 1 1.500 0z" fill="#555"/></svg>
<div class="a" style="left:432px;top:901px;width:18px;height:15px;font-size:11px;line-height:15px;text-align:center;color:#c9c9c9;overflow:hidden;letter-spacing:-.3px">91</div>
<div class="a" style="left:415px;top:927px;width:164px;height:5px;background:#22afaf"></div>
<div class="stab" style="left:170px;color:#1f6b3b;letter-spacing:-0.646px">USTERKI</div>
<div class="stab" style="left:314px;letter-spacing:-0.437px">BIZNESY</div>
<div class="stab" style="left:458.29999999999995px;letter-spacing:0.592px">Demontaże</div>
<div class="stab" style="left:597.5px;letter-spacing:0.656px">VoIPy do usunięcia</div>
<div class="stab" style="left:795px;letter-spacing:-0.29px">EKIPY</div>
<div class="stab" style="left:893px;letter-spacing:0.355px">IP</div>
<div class="stab" style="left:962px;letter-spacing:0.76px">Prace dla Koparki</div>
<div class="stab" style="left:1150px;width:61px;overflow:hidden;letter-spacing:1.168px">Arkusz4</div>
<svg style="left:244px;top:907px" width="9" height="5" viewBox="0 0 9 5"><path d="M0 0h9L4.500 5z" fill="#1f6b3b"/></svg>
<svg style="left:389px;top:907px" width="9" height="5" viewBox="0 0 9 5"><path d="M0 0h9L4.500 5z" fill="#5a5a5a"/></svg>
<svg style="left:553px;top:907px" width="9" height="5" viewBox="0 0 9 5"><path d="M0 0h9L4.500 5z" fill="#5a5a5a"/></svg>
<svg style="left:750px;top:907px" width="9" height="5" viewBox="0 0 9 5"><path d="M0 0h9L4.500 5z" fill="#5a5a5a"/></svg>
<svg style="left:849px;top:907px" width="9" height="5" viewBox="0 0 9 5"><path d="M0 0h9L4.500 5z" fill="#5a5a5a"/></svg>
<svg style="left:918px;top:907px" width="9" height="5" viewBox="0 0 9 5"><path d="M0 0h9L4.500 5z" fill="#5a5a5a"/></svg>
<svg style="left:1106px;top:907px" width="9" height="5" viewBox="0 0 9 5"><path d="M0 0h9L4.500 5z" fill="#5a5a5a"/></svg>
<div class="a" style="left:270px;top:889px;width:1px;height:44px;background:rgba(0,0,0,.06)"></div>
<div class="a" style="left:415px;top:889px;width:1px;height:44px;background:rgba(0,0,0,.06)"></div>
<div class="a" style="left:579px;top:889px;width:1px;height:44px;background:rgba(0,0,0,.06)"></div>
<div class="a" style="left:777px;top:889px;width:1px;height:44px;background:rgba(0,0,0,.06)"></div>
<div class="a" style="left:876px;top:889px;width:1px;height:44px;background:rgba(0,0,0,.06)"></div>
<div class="a" style="left:944px;top:889px;width:1px;height:44px;background:rgba(0,0,0,.06)"></div>
<div class="a" style="left:1133px;top:889px;width:1px;height:44px;background:rgba(0,0,0,.06)"></div>
<div class="a" style="left:1211px;top:889px;width:4px;height:44px;background:linear-gradient(90deg,rgba(0,0,0,.10),rgba(0,0,0,0))"></div>
<svg style="left:1228px;top:902px" width="6" height="11" viewBox="0 0 6 11"><path d="M6 0v11L0 5.500z" fill="#9e9e9e"/></svg>
<svg style="left:1261px;top:902px" width="6" height="11" viewBox="0 0 6 11"><path d="M0 0v11L6 5.500z" fill="#474747"/></svg>
<div class="a" style="left:1444px;top:889px;width:132px;height:44px;background:#bdbebe;border-left:1px solid #a4a4a4;border-right:1px solid #a4a4a4"></div>
<svg style="left:1457px;top:900px" width="20" height="23" viewBox="0 0 20 23"><path d="M2 0h16a2 2 0 0 1 2 2v15a2 2 0 0 1-2 2h-5.500L10 22l-2.500-3H2a2 2 0 0 1-2-2V2a2 2 0 0 1 2-2z" fill="#1f7040"/><path d="M10 3.500l1.600 4.400 4.400 1.600-4.400 1.600L10 15.500l-1.600-4.400L4 9.500l4.400-1.600z" fill="#c6cdc8"/></svg>
<div class="a" style="left:1491px;top:902px;font-size:14px;line-height:18px;color:#1f7040;letter-spacing:-.45px">Przeglądaj</div>
<svg style="left:1603px;top:906px" width="8" height="12" viewBox="0 0 8 12"><path d="M6.500 1 L1.500 6 L6.500 11" fill="none" stroke="#333" stroke-width="1.700"/></svg>
</div>
<style>
#ks{position:absolute;left:373px;top:148px;width:1174px;height:810px;background:#eff0f1;border-radius:5px 5px 0 0;box-shadow:0 7px 34px 4px rgba(0,0,0,.60),0 2px 10px rgba(0,0,0,.35)}
#ks .a{position:absolute}
#ks svg{position:absolute}
#ks .t{position:absolute;font-size:15px;line-height:19px;color:#232629}
#ks{-webkit-text-stroke:.18px currentColor}
#ks .it{position:absolute;left:38px;font-size:15px;line-height:19px;color:#232629}
#ks .sep{position:absolute;left:8px;width:218px;height:1px;background:#ebecec}
#ks .cat{position:absolute;left:0;width:234px;height:28px;background:#eff0f1;font-size:16.5px;line-height:28px;padding-left:8px;color:#232629}
#ks .lb{position:absolute;font-size:15px;line-height:17px;color:#232629;text-align:right;right:333.3px}
#ks .vl{position:absolute;font-size:15px;line-height:17px;color:#232629;left:847.5px}
</style>
<div id="ks">
<div class="a" style="left:0;top:0;width:1174px;height:71px;background:#dee0e2;border-radius:5px 5px 0 0;border-bottom:1px solid #c0c2c4"></div>
<div class="t" style="left:444px;top:5px;letter-spacing:.09px">Poprawki koloru — Ustawienia systemowe</div>
<svg style="left:1106px;top:10px" width="12" height="8" viewBox="0 0 12 8"><path d="M1 1.200 L6 6.200 L11 1.200" fill="none" stroke="#232629" stroke-width="1.300"/></svg>
<svg style="left:1130px;top:9px" width="12" height="8" viewBox="0 0 12 8"><path d="M1 6.800 L6 1.800 L11 6.800" fill="none" stroke="#232629" stroke-width="1.300"/></svg>
<svg style="left:1155px;top:9px" width="10" height="10" viewBox="0 0 10 10"><path d="M.5 .5 L9.500 9.500 M9.500 .5 L.5 9.500" fill="none" stroke="#232629" stroke-width="1.300"/></svg>
<svg style="left:13px;top:42px" width="16" height="17" viewBox="0 0 16 17"><path d="M1 8 L8 1 L15 8 M2.500 7v9h11V7 M11.500 4.500V2h1.500v4" fill="none" stroke="#232629" stroke-width="1.300"/><path d="M6.500 11h3.500v5H6.500z" fill="#232629"/></svg>
<div class="a" style="left:41.3px;top:36.5px;width:173px;height:28px;background:#fff;border:1px solid #bcbec0;border-radius:3px"></div>
<svg style="left:49px;top:44px" width="14" height="14" viewBox="0 0 14 14"><circle cx="5.500" cy="5.500" r="4" fill="none" stroke="#8a8c8e" stroke-width="1.200"/><path d="M8.500 8.500 L13 13" stroke="#8a8c8e" stroke-width="1.400"/></svg>
<div class="t" style="left:68px;top:41px;color:#9a9c9e;letter-spacing:-.47px">Szukaj...</div>
<svg style="left:226px;top:43px" width="17" height="14" viewBox="0 0 17 14"><path d="M0 1.500h17M0 7h17M0 12.500h17" stroke="#232629" stroke-width="1.700" fill="none"/></svg>
<div class="a" style="left:254px;top:29px;width:1px;height:781px;background:#c9cbcd"></div>
<div class="a" style="left:261px;top:34px;font-size:19.500px;line-height:26px;color:#232629;letter-spacing:.5px">Poprawki koloru</div>
<div class="a" style="left:0;top:71px;width:234px;height:693px;background:#fff;overflow:hidden" id="kl">
<svg style="left:8.5px;top:-4px" width="21" height="21" viewBox="0 0 21 21"><defs><linearGradient id="gb" x1="0" y1="0" x2="0" y2="1"><stop offset="0" stop-color="#fdbc4b"/><stop offset="1" stop-color="#f39c12"/></linearGradient></defs><ellipse cx="10.500" cy="17.500" rx="2.600" ry="2.200" fill="#a0a4a8"/><path d="M10.500 1c3.300 0 5 2.600 5 6 0 4.500 1.500 6.500 4 8.500v1.200h-18v-1.200c2.500-2 4-4 4-8.500 0-3.400 1.700-6 5-6z" fill="url(#gb)"/></svg>
<div class="it" style="top:-2px;letter-spacing:0px;color:#232629">Powiadomienia</div>
<svg style="left:9px;top:27px" width="20" height="20" viewBox="0 0 20 20"><defs><linearGradient id="g256" x1="0" y1="0" x2="0" y2="1"><stop offset="0" stop-color="#2fa6f6"/><stop offset="1" stop-color="#1681ee"/></linearGradient></defs><circle cx="10" cy="10" r="9.100" fill="url(#g256)"/><g fill="none" stroke="#dff1fb" stroke-width="1"><circle cx="7.500" cy="8" r="2"/><circle cx="12.500" cy="7" r="2"/><path d="M3.800 14c.3-2.500 1.800-3.500 3.700-3.500s3.400 1 3.700 3.500zM10.500 9.800c.6-.4 1.200-.6 2-.6 1.900 0 3.400 1 3.700 3.500h-4.500"/></g></svg>
<div class="it" style="top:28px;letter-spacing:0px;color:#232629">Użytkownicy</div>
<svg style="left:8.5px;top:57px" width="20" height="20" viewBox="0 0 21 21"><defs><linearGradient id="grg" x1="0" y1="0" x2="0" y2="1"><stop offset="0" stop-color="#2fa6f6"/><stop offset="1" stop-color="#1681ee"/></linearGradient></defs><path d="M1 1h19v13.500h-5.500l.3 5.500-6-5.500H1z" fill="url(#grg)"/><path d="M8.500 3.500h9v6.500h-3l.2 2.800-3-2.800H8.500z" fill="#d6ecfb"/></svg>
<div class="it" style="top:58px;letter-spacing:0.1px;color:#232629">Ustawienia regionalne</div>
<svg style="left:215px;top:61px" width="8" height="12" viewBox="0 0 8 12"><path d="M1 .7 L6.500 6 L1 11.300" fill="none" stroke="#4a4d50" stroke-width="1.100"/></svg>
<svg style="left:8.5px;top:87px" width="20" height="20" viewBox="0 0 21 21"><defs><linearGradient id="gap" x1="0" y1="0" x2="0" y2="1"><stop offset="0" stop-color="#45b0f4"/><stop offset="1" stop-color="#2a97ee"/></linearGradient></defs><rect x=".3" y=".3" width="20.400" height="20.400" fill="url(#gap)"/><g fill="#7cc6f6" stroke="#cfe9fb" stroke-width="1"><rect x="3" y="3" width="6" height="6"/><rect x="12" y="3" width="6" height="6"/><rect x="3" y="12" width="6" height="6"/><rect x="12" y="12" width="6" height="6"/></g></svg>
<div class="it" style="top:88px;letter-spacing:0.15px;color:#232629">Programy</div>
<svg style="left:215px;top:91px" width="8" height="12" viewBox="0 0 8 12"><path d="M1 .7 L6.500 6 L1 11.300" fill="none" stroke="#4a4d50" stroke-width="1.100"/></svg>
<svg style="left:9px;top:117px" width="20" height="20" viewBox="0 0 20 20"><defs><linearGradient id="g346" x1="0" y1="0" x2="0" y2="1"><stop offset="0" stop-color="#2fa6f6"/><stop offset="1" stop-color="#1681ee"/></linearGradient></defs><circle cx="10" cy="10" r="9.100" fill="url(#g346)"/><g fill="none" stroke="#e6f4fc" stroke-width="1.200"><circle cx="9.800" cy="5.800" r=".9" fill="#e6f4fc"/><path d="M9.800 7.500v4h3.400l1.500 3M8.300 9.600a3.300 3.300 0 1 0 4.300 4.200"/></g></svg>
<div class="it" style="top:118px;letter-spacing:0px;color:#232629">Ułatwienia</div>
<svg style="left:8.5px;top:147px" width="21" height="21" viewBox="0 0 21 21"><path d="M0 2h10v14H8.500l-4 3.800V16H0z" fill="#3fbf3a"/><path d="M2.200 .5h18.300V14H2.200z" fill="#2a97ee"/><path d="M2.200 .5h18.300V7H2.200z" fill="#45adf3"/><path d="M13.500 14l3.500 3.300V14z" fill="#1b7fdc"/><g fill="#e8f4fc" transform="translate(1 0)"><path d="M5.500 3.700l.7 1.600 1.700.1-1.300 1.100.4 1.700-1.500-.9-1.500.9.400-1.700-1.300-1.100 1.700-.1zM10.500 3.700l.7 1.600 1.700.1-1.300 1.100.4 1.700-1.500-.9-1.500.9.400-1.700-1.300-1.100 1.700-.1zM15.500 3.700l.7 1.600 1.700.1-1.300 1.100.4 1.700-1.500-.9-1.500.9.400-1.700-1.300-1.100 1.700-.1z"/></g></svg>
<div class="it" style="top:148px;letter-spacing:0.27px;color:#232629">Informacja zwrotna</div>
<svg style="left:9px;top:177px" width="20" height="20" viewBox="0 0 20 20"><defs><linearGradient id="g406" x1="0" y1="0" x2="0" y2="1"><stop offset="0" stop-color="#2fa6f6"/><stop offset="1" stop-color="#1b80e2"/></linearGradient></defs><circle cx="10" cy="10" r="9.100" fill="url(#g406)"/><path d="M3 4.500c2-2.500 5-3.500 8-3 .5 1.500-.5 2.500-2 3s-1 2-2.500 2.500S4 6 3 4.500zM12 18.500c2.500-.5 5-2.500 6-5.500-1-1.500-3-1.500-4 0s-2.500 3-2 5.500z" fill="#4cc47a"/><circle cx="8" cy="9" r="1.900" fill="#e6f4fc"/><path d="M4.500 15c.3-2.500 1.700-3.500 3.500-3.500s3.200 1 3.500 3.500z" fill="#e6f4fc"/><path d="M13.500 7.500h1.500v1.500h-1.500zM13.500 10.500h1.500v4h-1.500z" fill="#e6f4fc"/><path d="M3.500 14.500h10" stroke="#4cc47a" stroke-width="1.500"/></svg>
<div class="it" style="top:178px;letter-spacing:0px;color:#232629">Konta sieciowe</div>
<svg style="left:9px;top:235px" width="20" height="20" viewBox="0 0 20 20"><defs><linearGradient id="g464" x1="0" y1="0" x2="0" y2="1"><stop offset="0" stop-color="#2fa6f6"/><stop offset="1" stop-color="#1b80e2"/></linearGradient></defs><circle cx="10" cy="10" r="9.100" fill="url(#g464)"/><path d="M4 3.500C6 1.500 9 .800 11.500 1.200c1 1.800.5 3.200-1.500 3.800s-1 2.200-2.800 3-2 .5-2.700 2.200S2 9 1.200 7.500C1.800 6 2.800 4.500 4 3.500zM10 19c3.500-.3 6.500-2.300 8-5.500-.5-2-2.800-2.800-4.500-1.800s-1.200 2-2.800 3.300S9.200 17 10 19z" fill="#5bd08a"/><path d="M1 12c1 1.200 2.500 1.500 3.500 2.500s.8 2.500 2 3.200" fill="none" stroke="#5bd08a" stroke-width="1.800"/></svg>
<div class="it" style="top:236px;letter-spacing:-0.25px;color:#232629">Połączenia</div>
<svg style="left:9px;top:265px" width="20" height="20" viewBox="0 0 20 20"><defs><linearGradient id="g494" x1="0" y1="0" x2="0" y2="1"><stop offset="0" stop-color="#2fa6f6"/><stop offset="1" stop-color="#1b80e2"/></linearGradient></defs><circle cx="10" cy="10" r="9.100" fill="url(#g494)"/><path d="M4 3.500C6 1.500 9 .800 11.500 1.200c1 1.800.5 3.200-1.500 3.800s-1 2.200-2.800 3-2 .5-2.700 2.200S2 9 1.200 7.500C1.800 6 2.800 4.500 4 3.500zM10 19c3.500-.3 6.500-2.300 8-5.500-.5-2-2.800-2.800-4.500-1.800s-1.200 2-2.800 3.300S9.200 17 10 19z" fill="#5bd08a"/><path d="M1 12c1 1.200 2.500 1.500 3.500 2.500s.8 2.500 2 3.200" fill="none" stroke="#5bd08a" stroke-width="1.800"/></svg>
<div class="it" style="top:266px;letter-spacing:0px;color:#232629">Ustawienia</div>
<svg style="left:215px;top:269px" width="8" height="12" viewBox="0 0 8 12"><path d="M1 .7 L6.500 6 L1 11.300" fill="none" stroke="#4a4d50" stroke-width="1.100"/></svg>
<svg style="left:8.5px;top:295px" width="21" height="21" viewBox="0 0 21 21"><rect x=".5" y="1" width="20" height="19" fill="#d2463c"/><rect x=".5" y="1" width="20" height="4.500" fill="#e35d52"/><g stroke="#9d2f27" stroke-width=".9" fill="none"><path d="M.5 5.500h20M.5 10.500h20M.5 15.500h20M7 1v4.500M14 1v4.500M3.500 5.500v5M10.500 5.500v5M17.500 5.500v5M7 10.500v5M14 10.500v5M3.500 15.500V20M10.500 15.500V20M17.500 15.500V20"/></g><path d="M10.500 4c2 1.200 4.200 1.600 5.500 1.600 0 5.400-1.700 8.600-5.500 10.600C6.700 14.200 5 11 5 5.600c1.300 0 3.500-.4 5.500-1.600z" fill="#3f4448"/><path d="M10.500 7c1.200.7 2 1 3 1 0 3-.9 4.800-3 6z" fill="#d7dadc"/><path d="M10.500 7c-1.200.7-2 1-3 1 0 3 .9 4.800 3 6z" fill="#aeb2b5"/></svg>
<div class="it" style="top:296px;letter-spacing:0.1px;color:#232629">Zapora ogniowa</div>
<svg style="left:12px;top:352px" width="15" height="22" viewBox="0 0 15 22"><defs><linearGradient id="gm" x1="0" y1="0" x2="1" y2="0"><stop offset="0" stop-color="#b9bec2"/><stop offset=".45" stop-color="#f4f5f6"/><stop offset="1" stop-color="#aab0b5"/></linearGradient></defs><path d="M7.500 1.500c3.500 0 5.500 2.500 5.500 7v6c0 3.500-2.200 6-5.500 6S2 18 2 14.500v-6c0-4.500 2-7 5.500-7z" fill="url(#gm)"/><path d="M2.100 9.500c1.500 1.500 3.500 2 5.400 2s3.900-.5 5.400-2" fill="none" stroke="#c4c8cb" stroke-width=".6"/><rect x="6.600" y="3.800" width="1.800" height="5" rx=".9" fill="#3d8fd1"/></svg>
<div class="it" style="top:354px;letter-spacing:0.1px;color:#232629">Obsługa</div>
<svg style="left:215px;top:357px" width="8" height="12" viewBox="0 0 8 12"><path d="M1 .7 L6.500 6 L1 11.300" fill="none" stroke="#4a4d50" stroke-width="1.100"/></svg>
<svg style="left:8.5px;top:383px" width="21" height="20" viewBox="0 0 21 20"><rect x=".5" y=".5" width="20" height="15" fill="#2c3034"/><rect x="1.500" y="1.500" width="18" height="11" fill="#e9f2f8"/><rect x="1.500" y="1.500" width="18" height="5" fill="#f6fafc"/><path d="M8 15.500h5v2.500H8z" fill="#bfc3c6"/><path d="M6 18h9v1H6z" fill="#d5d8da"/></svg>
<div class="it" style="top:384px;letter-spacing:0.1px;color:#232629">Wyświetlacz</div>
<svg style="left:215px;top:387px" width="8" height="12" viewBox="0 0 8 12"><path d="M1 .7 L6.500 6 L1 11.300" fill="none" stroke="#4a4d50" stroke-width="1.100"/></svg>
<svg style="left:10px;top:413px" width="19" height="20" viewBox="0 0 19 20"><rect x=".5" y=".5" width="18" height="19" rx="1.500" fill="#31363b"/><rect x=".5" y="17" width="18" height="2.500" fill="#1d2124"/><circle cx="9.500" cy="9.500" r="6" fill="#6a6f74"/><circle cx="9.500" cy="9.500" r="4.300" fill="#878c90"/><circle cx="9.500" cy="9.500" r="2" fill="#31363b"/></svg>
<div class="it" style="top:414px;letter-spacing:0.1px;color:#232629">Dźwięk</div>
<svg style="left:9px;top:443px" width="20" height="20" viewBox="0 0 20 20"><defs><linearGradient id="g672" x1="0" y1="0" x2="0" y2="1"><stop offset="0" stop-color="#79d02b"/><stop offset="1" stop-color="#3fae1c"/></linearGradient></defs><circle cx="10" cy="10" r="9.100" fill="url(#g672)"/><path d="M11.500 3.500L6.500 11h3l-1 5.500 5-7.500h-3z" fill="#f0fbe6"/></svg>
<div class="it" style="top:444px;letter-spacing:0.05px;color:#232629">Energia</div>
<svg style="left:215px;top:447px" width="8" height="12" viewBox="0 0 8 12"><path d="M1 .7 L6.500 6 L1 11.300" fill="none" stroke="#4a4d50" stroke-width="1.100"/></svg>
<svg style="left:9px;top:473px" width="20" height="20" viewBox="0 0 20 20"><defs><linearGradient id="g702" x1="0" y1="0" x2="0" y2="1"><stop offset="0" stop-color="#2fa6f6"/><stop offset="1" stop-color="#1681ee"/></linearGradient></defs><circle cx="10" cy="10" r="9.100" fill="url(#g702)"/><path d="M6.800 6.800l6 6-3 2.700v-11l3 2.700-6 6" fill="none" stroke="#bfe2f7" stroke-width="1.100"/></svg>
<div class="it" style="top:474px;letter-spacing:0.1px;color:#232629">Bluetooth</div>
<svg style="left:13px;top:503px" width="12" height="18" viewBox="0 0 12 18"><path d="M2 0h8v5H2z" fill="#3b4045"/><path d="M3.300 1.500h1.700v2H3.300zM7 1.500h1.700v2H7z" fill="#e6e8ea"/><rect x="0" y="5" width="12" height="13" rx=".8" fill="#1d8df0"/><rect x="0" y="5" width="12" height="4.500" fill="#3aa2f5"/><path d="M6 8.500v6M4.700 10l1.300-1.500L7.300 10M4 12.500l2 1.500 2-1.800" fill="none" stroke="#bfe2f7" stroke-width=".7"/></svg>
<div class="it" style="top:504px;letter-spacing:0.1px;color:#232629">Nośniki</div>
<svg style="left:215px;top:507px" width="8" height="12" viewBox="0 0 8 12"><path d="M1 .7 L6.500 6 L1 11.300" fill="none" stroke="#4a4d50" stroke-width="1.100"/></svg>
<div class="a" style="left:0;top:528px;width:234px;height:30px;background:#3daee9"></div>
<div class="a" style="left:9.500px;top:533.5px;width:19px;height:19px;border-radius:50%;background:#26292c"></div><div class="a" style="left:11.500px;top:535.5px;width:15px;height:15px;border-radius:50%;background:conic-gradient(from 0deg,#ec4a3a,#ea3f8a 22%,#c03fb5 34%,#7d4fc0 44%,#35c46a 56%,#b8d432 66%,#f4c21a 76%,#f59a1c 88%,#ec4a3a)"></div><div class="a" style="left:15.800px;top:539.8px;width:6.400px;height:6.400px;border-radius:50%;background:#26292c"></div><div class="a" style="left:17.800px;top:541.8px;width:2.400px;height:2.400px;border-radius:50%;background:#c9ccce"></div>
<div class="it" style="top:534px;letter-spacing:0.1px;color:#fcfcfc">Poprawki koloru</div>
<svg style="left:9px;top:563px" width="20" height="20" viewBox="0 0 20 20"><defs><linearGradient id="g792" x1="0" y1="0" x2="0" y2="1"><stop offset="0" stop-color="#2a8fd0"/><stop offset="1" stop-color="#155a8f"/></linearGradient></defs><circle cx="10" cy="10" r="9.100" fill="url(#g792)"/><path d="M12.500 3L7 10.500h3l-2 5.500" fill="none" stroke="#e6f4fc" stroke-width="1.500"/><path d="M5.500 14l2.300 3.200 2.700-2.700z" fill="#e6f4fc"/></svg>
<div class="it" style="top:564px;letter-spacing:0.05px;color:#232629">Thunderbolt</div>
<svg style="left:9px;top:621px" width="20" height="20" viewBox="0 0 20 20"><defs><linearGradient id="g850" x1="0" y1="0" x2="0" y2="1"><stop offset="0" stop-color="#33abf8"/><stop offset="1" stop-color="#1681ee"/></linearGradient></defs><circle cx="10" cy="10" r="9.100" fill="url(#g850)"/><circle cx="10" cy="5.300" r="1.300" fill="#f2f9fd"/><rect x="8.900" y="8" width="2.200" height="7.500" fill="#f2f9fd"/></svg>
<div class="it" style="top:622px;letter-spacing:0.1px;color:#232629">O tym systemie</div>
<svg style="left:9px;top:651px" width="20" height="20" viewBox="0 0 20 20"><circle cx="10" cy="10" r="8.800" fill="#f6efe8" stroke="#f4a24e" stroke-width="1.300"/><circle cx="10" cy="10" r="6.800" fill="#dcdfe1" stroke="#c9cccf" stroke-width=".6"/><path d="M10 4.500l4 4.500h-2.500v5h-3V9H6z" fill="#f67400"/></svg>
<div class="it" style="top:652px;letter-spacing:0.16px;color:#232629">Uaktualnienia oprogram…</div>
<div class="sep" style="top:21.0px"></div>
<div class="sep" style="top:51.0px"></div>
<div class="sep" style="top:81.0px"></div>
<div class="sep" style="top:111.0px"></div>
<div class="sep" style="top:141.0px"></div>
<div class="sep" style="top:171.0px"></div>
<div class="sep" style="top:259.0px"></div>
<div class="sep" style="top:289.0px"></div>
<div class="sep" style="top:377.0px"></div>
<div class="sep" style="top:407.0px"></div>
<div class="sep" style="top:437.0px"></div>
<div class="sep" style="top:467.0px"></div>
<div class="sep" style="top:497.0px"></div>
<div class="sep" style="top:645.0px"></div>
<div class="cat" style="top:202px;letter-spacing:-0.4px">Sieć</div>
<div class="cat" style="top:319.5px;letter-spacing:0.2px">Sprzęt</div>
<div class="cat" style="top:588px;letter-spacing:0.2px">Zarządzanie systemem</div>
</div>
<div class="a" style="left:234px;top:71px;width:20px;height:693px;background:#f7f8f8;border-left:1px solid #e3e4e5"></div>
<div class="a" style="left:241.3px;top:255px;width:7.6px;height:502.5px;background:#c9cacb;border:1px solid #a9abad;border-radius:3.500px"></div>
<div class="a" style="left:0;top:764px;width:254px;height:1px;background:#c9cbcd"></div>
<svg style="left:9px;top:779px" width="17" height="17" viewBox="0 0 17 17"><path d="M0 15.500h16" stroke="#232629" stroke-width="1.900"/><path d="M3.500 11.200l1.300-3.500L12 .5l4 4-7.200 7.200-3.500 1.300z" fill="#232629"/><path d="M4 11.700l-1.800 1.800h4z" fill="#232629"/></svg>
<div class="t" style="left:32.5px;top:778px;letter-spacing:.13px">Podświetl zmienione ustawienia</div>
<div class="a" style="left:262px;top:78px;width:92px;height:52.5px;background:#d6d8da;border:1px solid #b5b7b9;border-radius:3px"></div>
<svg style="left:297.5px;top:84px" width="21" height="20" viewBox="0 0 21 20"><rect x=".5" y=".5" width="20" height="19" rx="1.200" fill="#2b2f33"/><rect x=".5" y="17" width="20" height="2.500" fill="#191c1f"/><path d="M3 6.500h15" stroke="#3daee9" stroke-width="1"/><path d="M3 12h15" stroke="#5b6166" stroke-width="1"/><path d="M3 12h4" stroke="#3daee9" stroke-width="1"/><rect x="13" y="5.200" width="2.400" height="2.600" rx=".6" fill="#f2f3f4"/><rect x="6" y="10.700" width="2.400" height="2.600" rx=".6" fill="#f2f3f4"/></svg>
<div class="t" style="left:270.5px;top:108px;letter-spacing:-.05px">Urządzenia</div>
<svg style="left:387px;top:86px" width="12" height="17" viewBox="0 0 12 17"><path d="M6 .5C8 4.500 11.500 7.500 11.500 11a5.500 5.500 0 0 1-11 0C.5 7.500 4 4.500 6 .5z" fill="#fbd08e"/><path d="M9.800 10.500a3.800 3.800 0 0 1-3.300 4.500" fill="none" stroke="#fdebcf" stroke-width="1.200"/></svg>
<div class="t" style="left:370px;top:108px;letter-spacing:.55px">Profile</div>
<div class="a" style="left:432px;top:77px;width:1px;height:55px;background:#c4c6c8"></div>
<svg style="left:481px;top:87px" width="15" height="15" viewBox="0 0 15 15"><path d="M7.500 0v15M0 7.500h15" stroke="#232629" stroke-width="1.100" fill="none"/></svg>
<div class="t" style="left:449.5px;top:108px;letter-spacing:.37px">Dodaj profil</div>
<svg style="left:540px;top:102px" width="11" height="7" viewBox="0 0 11 7"><path d="M.7 .8 L5.500 5.600 L10.300 .8" fill="none" stroke="#4a4d50" stroke-width="1.100"/></svg>
<div class="a" style="left:606px;top:93px;width:10px;height:1.500px;background:#232629"></div>
<div class="t" style="left:574.5px;top:108px;letter-spacing:.28px">Usuń profil</div>
<div class="a" style="left:262px;top:133px;width:412px;height:669.5px;background:#fff;border:1px solid #3daee9;border-radius:3px"></div>
<div class="a" style="left:272px;top:135px;width:1px;height:13px;background:#c8cacc"></div>
<div class="a" style="left:279px;top:154px;width:6px;height:1px;background:#c8cacc"></div>
<svg style="left:268px;top:151.5px" width="11" height="7" viewBox="0 0 11 7"><path d="M.7 .8 L5.500 5.600 L10.300 .8" fill="none" stroke="#4a4d50" stroke-width="1.100"/></svg>
<svg style="left:288.5px;top:141.5px" width="27" height="25" viewBox="0 0 27 25"><rect x=".5" y=".5" width="26" height="19.500" fill="#30353a"/><rect x="1.500" y="1.500" width="24" height="16.500" fill="#7fb8a8"/><path d="M1.500 1.500h9L1.500 18z" fill="#a9b86a"/><path d="M10.500 1.500h6l-6 9z" fill="#c9b070"/><path d="M16.500 1.500h9v6z" fill="#8fb0c0"/><path d="M25.500 7.500V18h-8z" fill="#a08fb0"/><path d="M10.500 10.500l7 7.500h-16z" fill="#6fae94"/><path d="M10.500 10.500l6-9 9 6-8 10.500z" fill="#86bba5"/><path d="M10 20h7v3h-7z" fill="#c4c8cb"/><path d="M7.500 23h12v1.200h-12z" fill="#d9dcde"/></svg>
<div class="t" style="left:324.5px;top:145px;letter-spacing:-.16px">NEC - EA234WMi/77511919TB</div>
<div class="a" style="left:292px;top:174px;width:1px;height:13px;background:#c8cacc"></div>
<div class="a" style="left:292px;top:186px;width:11px;height:1px;background:#c8cacc"></div>
<div class="a" style="left:303px;top:174px;width:370px;height:26px;background:#3daee9"></div>
<svg style="left:310.5px;top:182px" width="12" height="10" viewBox="0 0 12 10"><path d="M1 5 L4.300 8.300 L11 1.500" fill="none" stroke="#1b1e20" stroke-width="2"/></svg>
<div class="t" style="left:332.5px;top:178px;letter-spacing:-.11px;color:#fcfcfc">Przestrzeń kolorów: sRGB</div>
<div class="a" style="left:765px;top:99.5px;width:86.500px;height:30px;background:#c7c8c9;border-radius:3px 3px 0 0"></div>
<div class="a" style="left:677px;top:129px;width:490px;height:673.500px;background:#f3f4f4;border:1px solid #bfc1c3;border-radius:0 3px 3px 3px"></div>
<div class="a" style="left:677px;top:99px;width:88.500px;height:31px;background:#f3f4f4;border:1px solid #bfc1c3;border-bottom:none;border-top:2.500px solid #3daee9;border-radius:3px 3px 0 0"></div>
<div class="t" style="left:685.5px;top:105px;letter-spacing:.2px">Informacje</div>
<div class="t" style="left:774.5px;top:105px;letter-spacing:.16px">Metadane</div>
<div class="lb" style="top:138px;letter-spacing:0.294px;margin-right:-0.294px">Typ profilu:</div>
<div class="vl" style="top:138px;letter-spacing:0.046px">Urządzenie wyświetlające</div>
<div class="lb" style="top:161px;letter-spacing:0.127px;margin-right:-0.127px">Przestrzeń kolorów:</div>
<div class="vl" style="top:161px;letter-spacing:-2.302px">RGB</div>
<div class="lb" style="top:184px;letter-spacing:0.293px;margin-right:-0.293px">Utworzono:</div>
<div class="vl" style="top:184px;letter-spacing:-0.122px">środa, 16 lutego 2022 19:43:55 CET</div>
<div class="lb" style="top:207px;letter-spacing:-0.211px;margin-right:0.211px">Wersja:</div>
<div class="vl" style="top:207px;letter-spacing:-0.431px">4.30</div>
<div class="lb" style="top:242px;letter-spacing:0.008px;margin-right:-0.008px">Model urządzenia:</div>
<div class="vl" style="top:236px;letter-spacing:0.073px">This general purpose profile was designed by</div>
<div class="vl" style="top:253px;letter-spacing:0.106px">Hewlett-Packard and Microsoft and lives on</div>
<div class="vl" style="top:270px;letter-spacing:0.354px">as the default profile on the Internet for</div>
<div class="vl" style="top:287px;letter-spacing:-0.1px">untagged RGB colors and used in HDTV. Most</div>
<div class="vl" style="top:304px;letter-spacing:0.081px">uncalibrated displays are able to display most</div>
<div class="vl" style="top:321px;letter-spacing:0.109px">of the colors available i</div>
<div class="lb" style="top:344px;letter-spacing:-0.02px;margin-right:0.02px">Korekcja wyświetlacza:</div>
<div class="vl" style="top:344px;letter-spacing:-0.081px">Brak</div>
<div class="lb" style="top:367px;letter-spacing:0.214px;margin-right:-0.214px">Biały punkt:</div>
<div class="vl" style="top:367px;letter-spacing:-0.245px">5000K (D50)</div>
<div class="lb" style="top:396px;letter-spacing:-0.288px;margin-right:0.288px">Licencja:</div>
<div class="vl" style="top:390px;letter-spacing:0.221px">This profile is free of known copyright</div>
<div class="vl" style="top:407px;letter-spacing:0.326px">restrictions</div>
<div class="lb" style="top:430px;letter-spacing:-0.002px;margin-right:0.002px">Rozmiar pliku:</div>
<div class="vl" style="top:430px;letter-spacing:-0.358px">19,9 KiB</div>
<div class="lb" style="top:453px;letter-spacing:-0.003px;margin-right:0.003px">Nazwa pliku:</div>
<div class="vl" style="top:453px;letter-spacing:-0.958px">sRGB.icc</div>
<div class="a" style="left:848px;top:477.5px;width:161px;height:30px;background:#fcfcfc;border:1px solid #b8babc;border-radius:3px;box-shadow:0 1px 1px rgba(0,0,0,.15)"></div>
<div class="t" style="left:855px;top:483px;letter-spacing:.15px">Zainstaluj systemowo</div>
</div>
</body></html>
